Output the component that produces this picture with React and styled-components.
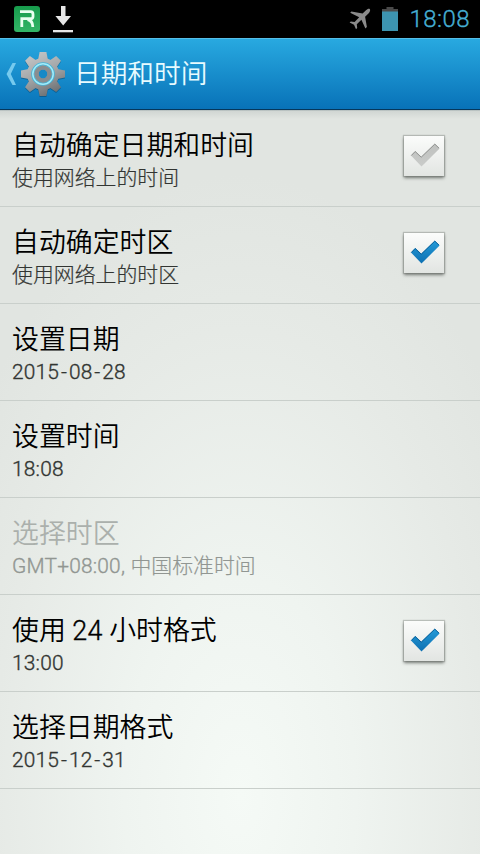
import React, { useState } from "react";
import styled, { createGlobalStyle } from "styled-components";

const GlobalStyle = createGlobalStyle`
  body {
    margin: 0;
    background-color: #e3e7e3;
    font-family: Roboto, "Noto Sans CJK SC", sans-serif;
  }
`;

const Screen = styled.div`
  height: 854px;
  display: flex;
  flex-direction: column;
  overflow: hidden;
`;

const StatusBar = styled.div`
  height: 38px;
  display: flex;
  align-items: center;
  justify-content: space-between;
  box-sizing: border-box;
  padding: 0 10px 0 14px;
  background-color: #000;
`;

const StatusGroup = styled.div`
  display: flex;
  align-items: center;
  gap: ${(props) => props.$gap}px;

  svg {
    display: block;
  }
`;

const Clock = styled.span`
  color: #45afd4;
  font-size: 24px;
  font-weight: 300;
  line-height: 40px;
  letter-spacing: 0.45px;
  -webkit-text-stroke: 0.35px;
`;

const Header = styled.header`
  height: 72px;
  display: flex;
  align-items: center;
  box-sizing: border-box;
  padding-left: 6px;
  background: linear-gradient(#28a9e0, #0872b8);
  border-top: 1px solid #56bfe8;
  border-bottom: 1px solid #05375c;

  svg {
    display: block;
  }
`;

const Title = styled.h1`
  margin: 0 0 0 8px;
  color: #e8fbff;
  font-size: 26.7px;
  font-weight: 350;
  line-height: 40px;
`;

const List = styled.main`
  flex: 1;
  background: linear-gradient(
      rgba(120, 140, 145, 0.6) 0,
      rgba(150, 160, 160, 0.22) 1px,
      rgba(150, 160, 160, 0) 9px
    ),
    radial-gradient(
      ellipse 330px 620px at 50% 92%,
      #f5faf6 0%,
      #eff4f0 35%,
      #e6eae6 75%,
      #e1e5e1 100%
    );
`;

const Row = styled.div`
  height: 97px;
  display: flex;
  align-items: center;
  justify-content: space-between;
  box-sizing: border-box;
  padding: 0 36px 0 12px;
  border-bottom: 1px solid #c9cfcb;
`;

const Texts = styled.div`
  display: flex;
  flex-direction: column;
  padding-top: 7px;
`;

const Name = styled.span`
  color: ${(props) => (props.$disabled ? "#abb0ac" : "#000")};
  font-size: 26.9px;
  font-weight: 350;
  line-height: 34px;
`;

const Summary = styled.span`
  color: ${(props) => (props.$disabled ? "#919692" : "#323532")};
  font-size: 20.9px;
  font-weight: 300;
  line-height: 31px;
  -webkit-text-stroke: 0.2px;
`;

const Latin = styled.span`
  letter-spacing: 0.2px;
  -webkit-text-stroke: 0.35px;
`;

const Dash = styled.span`
  padding: 0 1.8px;
`;

const Box = styled.button`
  width: 40px;
  height: 40px;
  margin-top: -4px;
  padding: 0;
  border: 0;
  background: linear-gradient(#fbfcfb, #e2e5e2);
  box-shadow: 0 0 1px 1px rgba(110, 115, 110, 0.35),
    0 2px 3px rgba(60, 65, 60, 0.65);

  svg {
    display: block;
  }
`;

const teeth = [0, 45, 90, 135, 180, 225, 270, 315];

function AppLogo() {
  return (
    <svg width="26" height="26" viewBox="0 0 26 26">
      <defs>
        <linearGradient id="logo" x1="0" y1="0" x2="0" y2="1">
          <stop offset="0" stopColor="#179b4c" />
          <stop offset="1" stopColor="#33b567" />
        </linearGradient>
      </defs>
      <rect width="26" height="26" rx="3" fill="url(#logo)" />
      <path
        d="M6 5.7H16.5Q19 5.7 19 8.2V10.4Q19 12.7 16.5 12.7H7.8V21M13.5 13.5Q18.8 14.5 18.8 21"
        fill="none"
        stroke="#e9fff0"
        strokeWidth="2.8"
      />
    </svg>
  );
}

function DownloadIcon() {
  return (
    <svg width="20" height="27" viewBox="0 0 20 27">
      <path d="M8 0h4.5v10H18l-7.8 9.5L2.4 10H8z" fill="#e6e6e6" />
      <path d="M0 24h20v2.3H0z" fill="#e6e6e6" />
    </svg>
  );
}

function PlaneIcon() {
  return (
    <svg width="22" height="22" viewBox="0 0 22 22">
      <path
        d="M20.8 1C19.8.2 18.2 1 17 2.2L13.6 5.6 2.4 3.4 1.2 4.8l9 4.4-4.6 4.8-3.8-.6L.6 14.6l4.4 2.2 2 4.4 1.2-1.2-.4-3.8 4.6-4.4 4 8.6 1.5-1.3-1.8-10.4 3.6-3.4C20.8 4 21.7 2 20.8 1z"
        fill="#8b8b8b"
      />
    </svg>
  );
}

function BatteryIcon() {
  return (
    <svg width="16" height="24" viewBox="0 0 16 24">
      <path d="M4.5 0h7v2H16v3H0V2h4.5z" fill="#4a4a4a" />
      <path d="M0 4.5h16V24H0z" fill="#3d94b0" />
    </svg>
  );
}

function GearIcon() {
  return (
    <svg width="46" height="46" viewBox="-23 -23 46 46">
      <defs>
        <linearGradient
          id="metal"
          gradientUnits="userSpaceOnUse"
          x1="-10"
          y1="-22"
          x2="10"
          y2="22"
        >
          <stop offset="0" stopColor="#c5c7c8" />
          <stop offset="0.5" stopColor="#a2a5a7" />
          <stop offset="1" stopColor="#686c6f" />
        </linearGradient>
        <mask id="teeth">
          <circle r="16" fill="#fff" />
          {teeth.map((angle) => (
            <path
              key={angle}
              d="M-5.2-13L-3.4-22H3.4L5.2-13z"
              fill="#fff"
              transform={`rotate(${angle})`}
            />
          ))}
          <circle r="4.2" fill="#000" />
        </mask>
      </defs>
      <g mask="url(#teeth)" transform="translate(0 1)" opacity="0.35">
        <rect x="-23" y="-23" width="46" height="46" fill="#06263e" />
      </g>
      <g mask="url(#teeth)">
        <rect x="-23" y="-23" width="46" height="46" fill="url(#metal)" />
      </g>
      <circle r="10.2" fill="none" stroke="#45b4d8" strokeWidth="3.2" />
      <circle r="10.2" fill="none" stroke="#a5ebf8" strokeWidth="1.5" />
      <circle r="6.4" fill="none" stroke="#898d90" strokeWidth="4.4" />
      <circle r="4.2" fill="#1689c7" />
    </svg>
  );
}

function CheckBox({ checked, onClick }) {
  const fill = checked ? "url(#blue)" : "url(#gray)";
  const shade = checked ? "#095f99" : "#8f918f";

  return (
    <Box type="button" role="checkbox" aria-checked={checked} onClick={onClick}>
      <svg width="40" height="40" viewBox="0 0 40 40">
        <defs>
          <linearGradient id="blue" x1="0" y1="0" x2="0" y2="1">
            <stop offset="0" stopColor="#249bd8" />
            <stop offset="1" stopColor="#0e70b2" />
          </linearGradient>
          <linearGradient id="gray" x1="0" y1="0" x2="0" y2="1">
            <stop offset="0" stopColor="#bfc1bf" />
            <stop offset="1" stopColor="#c9cbc9" />
          </linearGradient>
        </defs>
        <path d="M7 19.5l4.2-4.4 6.1 5.7L30.8 7.8l4.8 4.7L17.5 30.5z" fill={fill} />
        <path
          d="M7.3 19.5l3.9-4 6 5.7L30.8 8.1l4.2 4"
          fill="none"
          stroke={shade}
          strokeWidth="1"
        />
      </svg>
    </Box>
  );
}

function DateText({ value }) {
  const [year, month, day] = value.split("-");

  return (
    <Latin>
      {year}
      <Dash>-</Dash>
      {month}
      <Dash>-</Dash>
      {day}
    </Latin>
  );
}

export default function DateTimeSettings() {
  const [autoTime, setAutoTime] = useState(false);
  const [autoZone, setAutoZone] = useState(true);
  const [use24, setUse24] = useState(true);

  return (
    <>
      <GlobalStyle />
      <Screen>
        <StatusBar>
          <StatusGroup $gap={13}>
            <AppLogo />
            <DownloadIcon />
          </StatusGroup>
          <StatusGroup $gap={11}>
            <PlaneIcon />
            <BatteryIcon />
            <Clock>18:08</Clock>
          </StatusGroup>
        </StatusBar>
        <Header>
          <svg width="14" height="22" viewBox="0 0 14 22">
            <path d="M6.5 0H10L4.8 11 10 22H6.5L.5 11z" fill="#76caee" />
          </svg>
          <GearIcon />
          <Title>日期和时间</Title>
        </Header>
        <List>
          <Row>
            <Texts>
              <Name>自动确定日期和时间</Name>
              <Summary>使用网络上的时间</Summary>
            </Texts>
            <CheckBox
              checked={autoTime}
              onClick={() => setAutoTime(!autoTime)}
            />
          </Row>
          <Row>
            <Texts>
              <Name>自动确定时区</Name>
              <Summary>使用网络上的时区</Summary>
            </Texts>
            <CheckBox
              checked={autoZone}
              onClick={() => setAutoZone(!autoZone)}
            />
          </Row>
          <Row>
            <Texts>
              <Name>设置日期</Name>
              <Summary>
                <DateText value="2015-08-28" />
              </Summary>
            </Texts>
          </Row>
          <Row>
            <Texts>
              <Name>设置时间</Name>
              <Summary>
                <Latin>18:08</Latin>
              </Summary>
            </Texts>
          </Row>
          <Row>
            <Texts>
              <Name $disabled>选择时区</Name>
              <Summary $disabled>
                <Latin>GMT+08:00, </Latin>中国标准时间
              </Summary>
            </Texts>
          </Row>
          <Row>
            <Texts>
              <Name>
                使用 <Latin>24</Latin> 小时格式
              </Name>
              <Summary>
                <Latin>13:00</Latin>
              </Summary>
            </Texts>
            <CheckBox checked={use24} onClick={() => setUse24(!use24)} />
          </Row>
          <Row>
            <Texts>
              <Name>选择日期格式</Name>
              <Summary>
                <DateText value="2015-12-31" />
              </Summary>
            </Texts>
          </Row>
        </List>
      </Screen>
    </>
  );
}
